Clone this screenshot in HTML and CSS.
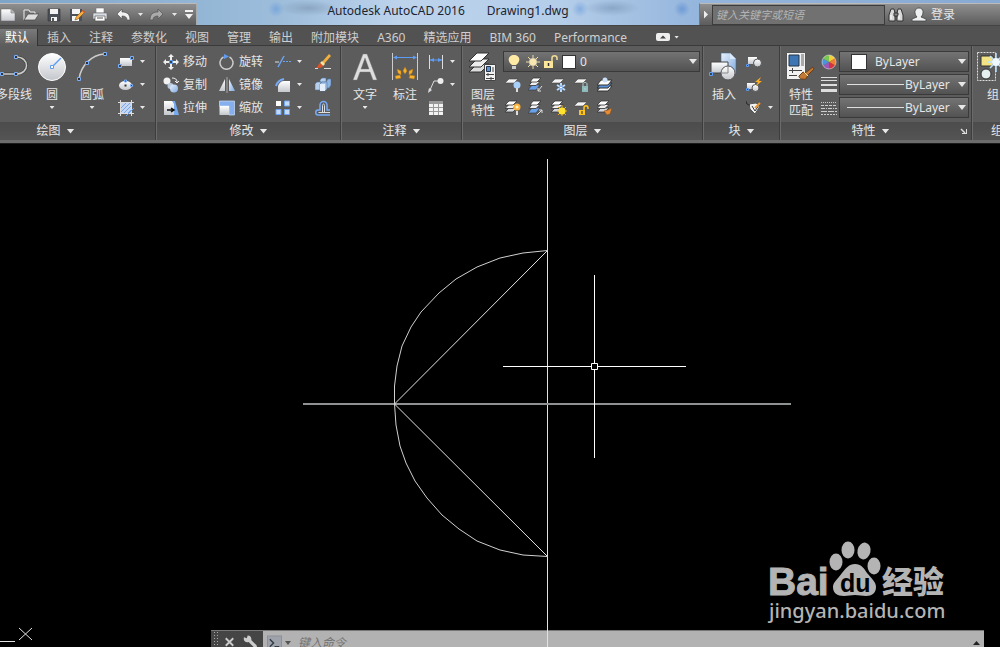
FILE: index.html
```html
<!DOCTYPE html>
<html lang="zh-CN">
<head>
<meta charset="utf-8">
<meta name="viewport" content="width=device-width, initial-scale=1">
<title>Autodesk AutoCAD 2016 - Drawing1.dwg</title>
<link rel="stylesheet" href="styles.css">
</head>
<body>
<svg class="defs" width="0" height="0" aria-hidden="true">
  <defs>
    <linearGradient id="paper" x1="0" y1="0" x2="0" y2="1"><stop offset="0" stop-color="#fff"/><stop offset="1" stop-color="#c3c6cc"/></linearGradient>
    <linearGradient id="sky" x1="0" y1="0" x2="1" y2="1"><stop offset="0" stop-color="#e8f2fd"/><stop offset="1" stop-color="#7fa9e0"/></linearGradient>
    <symbol id="sheet" viewBox="0 0 16 16"><path d="M4 1h9l-4 4H0z" fill="#f4f4f4" stroke="#444" stroke-width=".6"/></symbol>
    <symbol id="stack" viewBox="0 0 16 16"><path d="M4 8h8l-4 4H0z" fill="#d4d8de" stroke="#333" stroke-width=".8"/><path d="M4 4.500h8l-4 4H0z" fill="#eee" stroke="#333" stroke-width=".8"/><path d="M4 1h8L8 5H0z" fill="#fff" stroke="#333" stroke-width=".8"/></symbol>
    <symbol id="bluestack" viewBox="0 0 16 16"><path d="M4 8h8l-4 5H0z" fill="#6aa0e8" stroke="#333" stroke-width=".6"/><path d="M4 4.500h8l-4 4H1z" fill="#eee" stroke="#333" stroke-width=".8"/><path d="M5 1h8L9 5H2z" fill="#fff" stroke="#333" stroke-width=".8"/></symbol>
  </defs>
</svg>

<div class="app">
  <header class="titlebar">
    <div class="quick">
      <button class="q" aria-label="新建"><svg viewBox="0 0 16 16"><path d="M1 2h10l4 4v8H1z" fill="url(#paper)" stroke="#666" stroke-width=".5"/><path d="M11 2v4h4" fill="#bbb" stroke="#777" stroke-width=".6"/></svg></button>
      <button class="q" aria-label="打开"><svg viewBox="0 0 16 16"><path d="M1 13V3h5l1 2h5v3" fill="#707070" stroke="#eee"/><path d="M1 13L5 7h11l-4 6z" fill="#ddd" stroke="#444" stroke-width=".7"/></svg></button>
      <button class="q" aria-label="保存"><svg viewBox="0 0 16 16"><path d="M2 2h12v12H2z" fill="#4b5058" stroke="#333" stroke-width=".6"/><path d="M4 2h8v5H4zM5 10h6v4H5z" fill="#f3f3f3"/><path d="M6 11h2v3H6z" fill="#555"/></svg></button>
      <button class="q" aria-label="另存为"><svg viewBox="0 0 16 16"><path d="M1 2h12v12H1z" fill="#4b5058"/><path d="M3 2h8v5H3zM3 9h7v5H3z" fill="#f3f3f3"/><path d="M14 3l2 2-7 7-3 1 1-3z" fill="#f8ac3c" stroke="#70450e" stroke-width=".5"/><path d="M13 4l2 2 1-1-2-2z" fill="#e44e35"/></svg></button>
      <button class="q" aria-label="打印"><svg viewBox="0 0 16 16"><path d="M4 1h8v5H4z" fill="#fff" stroke="#777" stroke-width=".6"/><path d="M1 6h14v6H1z" fill="#d9dde3" stroke="#666" stroke-width=".6"/><path d="M3 9h10v5H3z" fill="#fff" stroke="#555" stroke-width=".7"/><path d="M5 11h6" stroke="#555"/></svg></button>
      <button class="q" aria-label="放弃"><svg viewBox="0 0 16 16"><path d="M2 7l5-5v3c5 0 8 2 8 8h-3c0-3-2-4-5-4v3z" fill="#f2f2f2" stroke="#555" stroke-width=".7"/></svg></button>
      <span class="caret"></span>
      <button class="q redo" aria-label="重做"><svg viewBox="0 0 16 16"><path d="M14 7L9 2v3c-5 0-8 2-8 8h3c0-3 2-4 5-4v3z" fill="#aaa" stroke="#555" stroke-width=".7"/></svg></button>
      <span class="caret"></span>
      <button class="q more" aria-label="自定义快速访问工具栏"><svg viewBox="0 0 16 16"><path d="M4 4h8" stroke="#f2f2f2" stroke-width="2"/><path d="M4 7h8l-4 5z" fill="#f2f2f2"/></svg></button>
    </div>
    <h1 class="title"><span>Autodesk AutoCAD 2016</span><span>Drawing1.dwg</span></h1>
    <div class="info">
      <span class="fold"></span>
      <input class="search" type="text" aria-label="搜索" placeholder="键入关键字或短语">
      <button class="q" aria-label="查找"><svg viewBox="0 0 16 16"><path d="M3 2h3l1 4v8H1V8zM13 2h-3L9 6v8h6V8z" fill="#d8d8d8" stroke="#333"/><path d="M6 6h4v3H6z" fill="#888" stroke="#333"/><path d="M3 8v4M11 8v4" stroke="#fff"/></svg></button>
      <button class="login"><svg viewBox="0 0 16 16"><path d="M1 14v-2l5-2c-3-3-3-9 2-9s5 6 2 9l5 2v2z" fill="#eef0f2" stroke="#444" stroke-width=".8"/></svg>登录</button>
    </div>
  </header>

  <nav class="tabs">
    <button class="tab active">默认</button><button class="tab">插入</button><button class="tab">注释</button><button class="tab">参数化</button><button class="tab">视图</button><button class="tab">管理</button><button class="tab">输出</button><button class="tab">附加模块</button><button class="tab">A360</button><button class="tab">精选应用</button><button class="tab">BIM 360</button><button class="tab">Performance</button>
    <button class="collapse" aria-label="最小化功能区"><svg viewBox="0 0 14 8"><rect width="14" height="8" rx="2" fill="#eee"/><path d="M4 5.500l3-3 3 3z" fill="#444"/></svg><span class="caret"></span></button>
  </nav>

  <div class="ribbon">
    <section class="panel draw">
      <div class="body">
        <button class="big first"><svg viewBox="0 0 32 32"><path d="M0 24h16c14 0 14-17 0-17" fill="none" stroke="#444" stroke-width="3"/><path d="M0 24h16c14 0 14-17 0-17" fill="none" stroke="#ccc" stroke-width="1.500"/><path d="M14.500 5.500h3v3h-3zM14.500 22.500h3v3h-3zM.5 22.500h3v3h-3z" fill="#333" stroke="#79aefa"/></svg><span>多段线</span></button>
        <button class="big"><svg viewBox="0 0 32 32"><circle cx="16" cy="17" r="13.500" fill="url(#paper)" stroke="#fff"/><path d="M16 17l9-9" stroke="#5f9df5" stroke-width="1.500"/><path d="M14.500 15.500h3v3h-3z" fill="#fff" stroke="#5f9df5"/></svg><span>圆</span><i class="caret"></i></button>
        <button class="big"><svg viewBox="0 0 32 32"><path d="M3 29C5 15 16 5 28 4" fill="none" stroke="#ccc" stroke-width="1.500"/><path d="M1.500 27.500h3v3h-3zM9.500 11.500h3v3h-3zM27.500 2.500h3v3h-3z" fill="#333" stroke="#79aefa"/></svg><span>圆弧</span><i class="caret"></i></button>
        <div class="stack">
          <button class="tool" aria-label="矩形"><svg viewBox="0 0 16 16"><path d="M2 4h12v8H2z" fill="url(#paper)"/><path d="M12.500 2.500h3v3h-3zM.5 10.500h3v3h-3z" fill="#444" stroke="#79aefa"/></svg><i class="caret"></i></button>
          <button class="tool" aria-label="椭圆"><svg viewBox="0 0 16 16"><ellipse cx="7.500" cy="8.500" rx="6.500" ry="4.500" fill="url(#paper)"/><path d="M6.500 7.500h2v2h-2z" fill="#333"/><path d="M6.500 3h2v2h-2zM12.500 7.500h2v2h-2z" fill="#444" stroke="#79aefa"/></svg><i class="caret"></i></button>
          <button class="tool" aria-label="图案填充"><svg viewBox="0 0 16 16"><path d="M3 3h10v10H3z" fill="#c3d6f5"/><path d="M3 8l5-5M3 12l9-9M6 13l7-7M10 13l3-3" stroke="#7ea6e2"/><path d="M0 2.500h16M0 13.500h16M2.500 0v16M13.500 0v16" stroke="#ddd"/><path d="M8 16l8-8" stroke="#6ca4f3"/></svg><i class="caret"></i></button>
        </div>
      </div>
      <button class="foot">绘图<i class="caret wide"></i></button>
    </section>

    <section class="panel modify">
      <div class="body">
        <div class="stack labelled">
          <button class="tool"><svg viewBox="0 0 16 16"><path d="M8 0l3 3H9v3H7V3H5zM8 16l-3-3h2v-3h2v3h2zM0 8l3-3v2h3v2H3v2zM16 8l-3 3V9h-3V7h3V5z" fill="#eee"/><path d="M6.500 6.500h3v3h-3z" fill="#345" stroke="#5f9df5"/></svg>移动</button>
          <button class="tool"><svg viewBox="0 0 16 16"><circle cx="4" cy="4" r="3.500" fill="#f2f2f2"/><path d="M9 1c3 0 5 1 5 4M12 4l2 2 2-2" fill="none" stroke="#eee"/><circle cx="7.500" cy="9" r="3" fill="#b9c9dd"/><circle cx="11" cy="11.500" r="4" fill="url(#sky)"/></svg>复制</button>
          <button class="tool"><svg viewBox="0 0 16 16"><path d="M9 1h3l4 14H9z" fill="#78aaf0"/><path d="M1 1h8l2 3v11H1z" fill="url(#paper)"/><path d="M4 10h6M8 8l3 2-3 2" fill="none" stroke="#111" stroke-width="1.500"/></svg>拉伸</button>
        </div>
        <div class="stack labelled">
          <button class="tool"><svg viewBox="0 0 16 16"><path d="M10.500 3a6.500 6.500 0 1 1-6 0" fill="none" stroke="#ccc" stroke-width="1.500"/><path d="M5 0l5 2.500L5 5z" fill="#5f9df5"/></svg>旋转</button>
          <button class="tool"><svg viewBox="0 0 16 16"><path d="M6 2v12H0z" fill="url(#paper)"/><path d="M10 2v12h6z" fill="url(#sky)"/><path d="M8 0v16" stroke="#aaa"/></svg>镜像</button>
          <button class="tool"><svg viewBox="0 0 16 16"><path d="M.5 1h15v14H10V6H.5z" fill="#86afed" stroke="#c9def9" stroke-width=".7"/><path d="M.5 6H10v9H.5z" fill="url(#paper)"/></svg>缩放</button>
        </div>
        <div class="stack">
          <button class="tool" aria-label="修剪"><svg viewBox="0 0 16 16"><path d="M0 8h4" stroke="#ddd"/><path d="M3 13l6-11" stroke="#6ca4f3" stroke-width="1.500"/><path d="M8 7.500h8" stroke="#6ca4f3" stroke-dasharray="2 1"/></svg><i class="caret"></i></button>
          <button class="tool" aria-label="圆角"><svg viewBox="0 0 16 16"><path d="M3 15V9c1-3 3-5 6-5h6v11z" fill="url(#paper)"/><path d="M1 9c1-4 3-6 8-7" fill="none" stroke="#77aaf5" stroke-width="2"/></svg><i class="caret"></i></button>
          <button class="tool" aria-label="阵列"><svg viewBox="0 0 16 16"><path d="M1 1h5v5H1z" fill="#fff"/><path d="M9.500 1h5v5h-5zM1 9.500h5v5H1zM9.500 9.500h5v5h-5z" fill="#c6dbf8" stroke="#6ca4f3"/></svg><i class="caret"></i></button>
        </div>
        <div class="stack narrow">
          <button class="tool" aria-label="删除"><svg viewBox="0 0 16 16"><path d="M14 0l2 2-7 8-2-2z" fill="#f3b03c"/><path d="M7 7l3 3-2 2-3-3z" fill="#f5e2a0"/><path d="M5 9l3 3c-1 2-4 2-7 2 2-1 2-4 4-5z" fill="#dc5227"/><path d="M0 14.500h3M9 14.500h7" stroke="#ddd"/></svg></button>
          <button class="tool" aria-label="分解"><svg viewBox="0 0 16 16"><path d="M0 7l2-2h4v7l-1 1H0zM5 3l2-2h4v4H5z" fill="#b6cfec" stroke="#56779e" stroke-width=".6"/><path d="M11 5l2-3h3v6l-2 3h-3z" fill="#8db4e4" stroke="#56779e" stroke-width=".6"/><path d="M5 7l2-2h5v7l-2 2H5z" fill="#9dbfe8" stroke="#56779e" stroke-width=".6"/><path d="M5 7h5v7H5z" fill="#e6eff9"/></svg></button>
          <button class="tool" aria-label="偏移"><svg viewBox="0 0 16 16"><path d="M15 15H3c-3 0-3-5 0-5h2V5a3.500 3.500 0 0 1 7 0v5h3" fill="none" stroke="#77aaf5" stroke-width="1.500"/><path d="M15 12.500H3.500M7.500 12V5.500c0-2 2-2 2 0V12" fill="none" stroke="#ddd"/></svg></button>
        </div>
      </div>
      <button class="foot">修改<i class="caret wide"></i></button>
    </section>

    <section class="panel annotate">
      <div class="body">
        <button class="big"><svg viewBox="0 0 32 32"><path d="M4 30L14 4h4l10 26h-4l-3-8H11l-3 8zM12 19h8L16 8z" fill="#dedede" stroke="#777" stroke-width=".4"/></svg><span>文字</span><i class="caret"></i></button>
        <button class="big"><svg viewBox="0 0 32 32"><path d="M3.500 3v27M28.500 3v27" stroke="#ccc"/><path d="M5 7.500h22" stroke="#5f9df5"/><path d="M4 7.500l4-2v4zM28 7.500l-4-2v4z" fill="#5f9df5"/><path d="M16 17l2 4-2 3-2-3zM8 19l4 2v4l-3-2zM24 19l-4 2v4l3-2zM6 26l5-1 1 3-5 1zM26 26l-5-1-1 3 5 1z" fill="#f6b32c" stroke="#b87413" stroke-width=".5"/></svg><span>标注</span></button>
        <div class="stack">
          <button class="tool" aria-label="线性"><svg viewBox="0 0 16 16"><path d="M1.500 1v14M14.500 1v14" stroke="#ddd"/><path d="M2 6h12" stroke="#5f9df5"/><path d="M2 6l4-2v4zM14 6l-4-2v4z" fill="#5f9df5"/></svg><i class="caret"></i></button>
          <button class="tool" aria-label="引线"><svg viewBox="0 0 16 16"><path d="M2 13l4-9h5" fill="none" stroke="#ddd"/><path d="M0 16l1-5 3 2z" fill="#ddd"/><circle cx="12.500" cy="4" r="3" fill="#eee"/></svg><i class="caret"></i></button>
          <button class="tool" aria-label="表格"><svg viewBox="0 0 16 16"><path d="M1 2h14v13H1z" fill="#f2f2f2"/><path d="M1 1h14v3H1z" fill="#999"/><path d="M1 7.500h14M1 11.500h14M5.500 4v11M10.500 4v11" stroke="#999"/></svg></button>
        </div>
      </div>
      <button class="foot">注释<i class="caret wide"></i></button>
    </section>

    <section class="panel layers">
      <div class="body">
        <button class="big"><svg viewBox="0 0 32 32"><path d="M10 14h12L14 22H2z" fill="#ddd" stroke="#333"/><path d="M10 9h12L14 17H2z" fill="#eee" stroke="#333"/><path d="M10 3h12L14 11H2z" fill="#fff" stroke="#333"/><path d="M17.500 14.500h11v16h-11z" fill="#f2f2f2" stroke="#444"/><path d="M19.500 16.500h4v5h-4z" fill="#5f91d6" stroke="#234"/><path d="M26 17v5M19 24.500h8M19 28.500h8M21 23v3M24 27v3" stroke="#444"/></svg><span>图层</span><span>特性</span></button>
        <div class="layerside">
          <div class="combo">
            <svg class="lamp" viewBox="0 0 54 16"><path d="M5 11C-1 6 2 1 7 1s8 5 2 10z" fill="#ffeaa5"/><path d="M5 12h4v3H5z" fill="#ccc"/><g stroke="#f0dfa4"><path d="M26 1v14M19 8h14M21 3l10 10M31 3L21 13"/></g><circle cx="26" cy="8" r="4" fill="#f7e7b0" stroke="#999" stroke-width=".5"/><path d="M37 7h9v7h-9z" fill="#fbe69b"/><path d="M45 8V4c0-3 5-3 5 0v2" fill="none" stroke="#f1dc95" stroke-width="1.500"/><path d="M41.500 9v3" stroke="#333" stroke-width="1.500"/></svg>
            <span class="swatch"></span>
            <select aria-label="图层"><option>0</option></select><i class="caret wide"></i>
          </div>
          <div class="iconrow">
            <button class="tool" aria-label="关"><svg viewBox="0 0 16 16"><use href="#sheet" y="1"/><circle cx="12" cy="8" r="3.500" fill="#a9d0fa"/><path d="M12 11v4" stroke="#ddd" stroke-width="2"/></svg></button>
            <button class="tool" aria-label="隔离"><svg viewBox="0 0 16 16"><use href="#bluestack"/><path d="M14 9l-4 5M10 11v3h3" stroke="#ddd" fill="none"/></svg></button>
            <button class="tool" aria-label="冻结"><svg viewBox="0 0 16 16"><use href="#sheet" y="1"/><path d="M10 6v9M6 8l8 5M14 8l-8 5" stroke="#bcdcff" stroke-width="2"/><circle cx="10" cy="10.500" r="1.500" fill="#fff" stroke="#619be7"/></svg></button>
            <button class="tool" aria-label="锁定"><svg viewBox="0 0 16 16"><use href="#sheet" y="1"/><path d="M8 9h6v6H8z" fill="#8ebabb"/><path d="M9 9V7c0-2 4-2 4 0v2M10 12h2" fill="none" stroke="#b1d1d1"/></svg></button>
            <button class="tool" aria-label="置为当前"><svg viewBox="0 0 16 16"><path d="M4 9h11l-4 5H0z" fill="#fff" stroke="#333"/><path d="M4 6h11l-4 5H0z" fill="#5b8fd6" stroke="#333"/><path d="M4 3h11l-4 5H0z" fill="#fff" stroke="#333"/><circle cx="8" cy="3" r="2.500" fill="#cde0f7"/></svg></button>
          </div>
          <div class="iconrow">
            <button class="tool" aria-label="打开所有图层"><svg viewBox="0 0 16 16"><use href="#stack"/><circle cx="12" cy="7" r="3.500" fill="#ffb13d"/><circle cx="12" cy="7" r="1.500" fill="#fff4bb"/><path d="M12 11v4" stroke="#ddd" stroke-width="2"/></svg></button>
            <button class="tool" aria-label="取消隔离"><svg viewBox="0 0 16 16"><use href="#bluestack"/><path d="M9 15l5-5M11 10h3v3" stroke="#ddd" fill="none"/></svg></button>
            <button class="tool" aria-label="解冻所有图层"><svg viewBox="0 0 16 16"><use href="#stack"/><path d="M11 5v11M6 11h10M7 7l8 8M15 7l-8 8" stroke="#e6ab22"/><circle cx="11" cy="11" r="3.500" fill="#ffe22f"/></svg></button>
            <button class="tool" aria-label="解锁"><svg viewBox="0 0 16 16"><use href="#sheet" y="1"/><path d="M5 10h6v5H5z" fill="#ffc31b"/><path d="M10 10V8c0-3 4-3 4 0v1" fill="none" stroke="#ffc31b" stroke-width="1.500"/><path d="M8 11v3" stroke="#333"/></svg></button>
            <button class="tool" aria-label="匹配图层"><svg viewBox="0 0 16 16"><use href="#stack"/><path d="M15 8l-4 2-4 1 3 4 3-1z" fill="#e28d3a" stroke="#8b4d18" stroke-width=".6"/></svg></button>
          </div>
        </div>
      </div>
      <button class="foot">图层<i class="caret wide"></i></button>
    </section>

    <section class="panel block">
      <div class="body">
        <button class="big"><svg viewBox="0 0 32 32"><path d="M13 3h9l6 6v15H13z" fill="url(#sky)" stroke="#46698e" stroke-width=".6"/><path d="M22 3v6h6" fill="#d9eafc"/><path d="M3 12h17v11H3z" fill="url(#paper)" stroke="#444"/><circle cx="20" cy="23" r="7" fill="url(#paper)" stroke="#555"/><path d="M20 16v7h-7" fill="none" stroke="#888"/><path d="M1.500 22.500h3v3h-3z" fill="#345" stroke="#5f9df5"/></svg><span>插入</span></button>
        <div class="stack">
          <button class="tool" aria-label="创建块"><svg viewBox="0 0 16 16"><path d="M2 3h9v7H2z" fill="url(#paper)"/><circle cx="11.500" cy="9" r="4" fill="url(#paper)" stroke="#555"/><path d="M.5 10.500h2v2h-2z" fill="#345" stroke="#5f9df5"/></svg></button>
          <button class="tool" aria-label="编辑块"><svg viewBox="0 0 16 16"><path d="M1 6h8v6H1z" fill="url(#paper)"/><circle cx="9.500" cy="11" r="3.500" fill="url(#paper)" stroke="#555"/><path d="M15 0L9 5h3l-2 4 6-5h-3z" fill="#ffae22"/><path d="M.5 11.500h2v2h-2z" fill="#345" stroke="#5f9df5"/></svg></button>
          <button class="tool" aria-label="编辑属性"><svg viewBox="0 0 16 16"><path d="M3 4l7-1 4 3-5 8-5-5z" fill="#f2f2f2" stroke="#555"/><path d="M0 1c0 3 2 4 4 4" fill="none" stroke="#222"/><path d="M6 6l3 5 4-6" fill="none" stroke="#333"/><path d="M14 3l-5 5" stroke="#e99831" stroke-width="2"/></svg><i class="caret"></i></button>
        </div>
      </div>
      <button class="foot">块<i class="caret wide"></i></button>
    </section>

    <section class="panel props">
      <div class="body">
        <button class="big"><svg viewBox="0 0 32 32"><path d="M1.500 2.500h19v27h-19z" fill="#f2f2f2" stroke="#555"/><path d="M4 5h10v11H4z" fill="#3e76b4" stroke="#234"/><path d="M16 4v12h3V4z" fill="#aaa"/><path d="M4 20.500h13M7.500 18v5M4 25.500h8" stroke="#444"/><path d="M28 17l-8 6-2-1-4 4c-1 2 4 4 7 3l2-4 6-6z" fill="#c17a36" stroke="#6b3e17"/><path d="M19 22l4 4" stroke="#ffe0a0"/></svg><span>特性</span><span>匹配</span></button>
        <div class="proplist">
          <div class="prop">
            <svg viewBox="0 0 16 16"><path d="M8 8V1a7 7 0 0 1 6 3.500z" fill="#f4cf38"/><path d="M8 8l6-3.500a7 7 0 0 1 0 7z" fill="#ee7f36"/><path d="M8 8l6 3.500A7 7 0 0 1 8 15z" fill="#d63341"/><path d="M8 8v7a7 7 0 0 1-6-3.500z" fill="#9a59b8"/><path d="M8 8l-6 3.500a7 7 0 0 1 0-7z" fill="#4896e2"/><path d="M8 8L2 4.500A7 7 0 0 1 8 1z" fill="#79c653"/><circle cx="8" cy="8" r="7" fill="none" stroke="#ddd" stroke-width=".6"/></svg>
            <div class="combo"><span class="swatch"></span><select class="color" aria-label="对象颜色"><option>ByLayer</option></select><i class="caret wide"></i></div>
          </div>
          <div class="prop">
            <svg viewBox="0 0 16 16"><path d="M0 .5h16M0 3.500h16" stroke="#ddd"/><path d="M0 8h16" stroke="#ddd" stroke-width="2"/><path d="M0 13.500h16" stroke="#ddd" stroke-width="3"/></svg>
            <div class="combo"><span class="line"></span><select aria-label="线宽"><option>ByLayer</option></select><i class="caret wide"></i></div>
          </div>
          <div class="prop">
            <svg viewBox="0 0 16 16"><path d="M0 2.500h16" stroke="#ccc" stroke-dasharray="1 1"/><path d="M0 5.500h16" stroke="#ccc" stroke-dasharray="3 1"/><path d="M0 8.500h16" stroke="#ccc" stroke-dasharray="4 1 1 1"/><path d="M0 11.500h16" stroke="#ccc" stroke-dasharray="6 1"/><path d="M0 14.500h16" stroke="#ccc" stroke-dasharray="2 1"/></svg>
            <div class="combo"><span class="line"></span><select aria-label="线型"><option>ByLayer</option></select><i class="caret wide"></i></div>
          </div>
        </div>
      </div>
      <div class="footrow"><button class="foot">特性<i class="caret wide"></i></button><button class="launch" aria-label="特性设置"><svg viewBox="0 0 8 8"><path d="M1 2l4 4" stroke="#ddd" stroke-width="1.500"/><path d="M6 2v4H2v1h5V2z" fill="#ddd"/></svg></button></div>
    </section>

    <section class="panel group">
      <div class="body">
        <button class="big"><svg viewBox="0 0 32 32"><path d="M.5 2.500h18v28H.5z" fill="none" stroke="#ddd" stroke-dasharray="2 1"/><path d="M4 6h12v10H4z" fill="#f2e485" stroke="#333"/><circle cx="9" cy="24" r="5" fill="#e6f0f1" stroke="#333"/><path d="M19 3v19M10 12h18M13 6l12 12M25 6L13 18" stroke="#bfe2ff" stroke-width="1.500"/><circle cx="19" cy="12" r="4" fill="#eef8ff"/></svg><span>组</span></button>
      </div>
      <button class="foot">组</button>
    </section>
  </div>

  <main class="canvas">
    <form class="command">
      <div class="handle">
        <span class="grip"></span>
        <button type="button" aria-label="关闭"><svg viewBox="0 0 16 16"><path d="M4 4l8 8M12 4l-8 8" stroke="#ccc" stroke-width="2"/></svg></button>
        <button type="button" aria-label="自定义"><svg viewBox="0 0 16 16"><path d="M5 1L4 4 1 3c-1 4 2 6 5 5l6 6c2 1 4-1 2-3L9 6c0-3-1-5-4-5z" fill="#ccc"/></svg></button>
      </div>
      <svg class="prompt" viewBox="0 0 16 16"><rect x=".5" y=".5" width="15" height="15" fill="#9da2ab" stroke="#8b9098"/><path d="M3 4l4 4-4 4M8 12h5" fill="none" stroke="#333a44" stroke-width="1.500"/></svg>
      <i class="caret dark"></i>
      <input type="text" aria-label="命令" placeholder="键入命令">
      <i class="up"></i>
    </form>
    <svg class="drawing" width="1000" height="504" viewBox="0 143 1000 504" fill="none" stroke="#e2e2e2" role="img" aria-label="Drawing1.dwg">
      <path d="M547.500 159V647"/>
      <path d="M303 404H791" stroke="#8f9292" stroke-width="2"/>
      <path d="M547.500 250.500L394.500 404L547.500 556.500"/>
      <path d="M547.500 250.500L523 253L500 258L477 267L456 279L439 293L421 312L411 327L402 346L397 366L394.500 386V404L396 425L400 446L406 463L415 481L427 498L442 515L459 529L477 541L500 550L523 555L547.500 556.500" stroke="#d0d0d0"/>
      <path d="M594.500 275V363M594.500 370V458M503 366.500H591M598 366.500H686M591.500 363.500h6v6h-6z" stroke="#fff"/>
      <path d="M0 641.500H15M19 628L32 640M32 628L19 640"/>
    </svg>
    <svg class="watermark" width="184" height="90" viewBox="0 0 184 90" fill="#b4b4b4" role="img" aria-label="Baidu 经验">
      <text class="bai" x="2" y="55">Bai</text>
      <ellipse cx="70" cy="22" rx="6.500" ry="8.500"/><ellipse cx="82" cy="10" rx="6.500" ry="8.500"/><ellipse cx="98" cy="11" rx="6.500" ry="8.500" transform="rotate(12 98 11)"/><ellipse cx="108" cy="26" rx="6.500" ry="8.500"/>
      <path d="M89 24c6 0 9 4 12 9 5 6 9 9 9 14 0 6-4 9-10 9-4 0-7-1-11-1s-7 1-11 1c-7 0-11-3-11-9 0-5 5-8 9-14 4-5 7-9 13-9z"/>
      <text class="du" x="74" y="52">du</text>
      <text class="jy" x="116" y="53">经验</text>
      <text class="url" x="3" y="78">jingyan.baidu.com</text>
    </svg>
  </main>
</div>
</body>
</html>
```

FILE: styles.css
```css
* { box-sizing: border-box; }

body {
  margin: 0;
  background: #000;
  color: #e6e6e6;
  font: 12px/16px "Noto Sans", "Noto Sans CJK SC", sans-serif;
  overflow: hidden;
}

button, input, select {
  font: inherit;
  color: inherit;
  background: none;
  border: 0;
  padding: 0;
  margin: 0;
}

svg { display: block; flex: none; }
.defs { position: absolute; }

.app {
  display: flex;
  flex-direction: column;
  min-height: 100vh;
}

.caret {
  flex: none;
  width: 5px;
  height: 3px;
  background: #e8e8e8;
  clip-path: polygon(0 0, 100% 0, 50% 100%);
}
.caret.wide { width: 8px; height: 5px; }
.caret.dark { background: #555; width: 6px; height: 4px; }

/* Title bar */
.titlebar {
  display: flex;
  height: 26px;
  background:
    radial-gradient(ellipse 30px 8px at 308px 8px, #8aa6c2, transparent),
    radial-gradient(ellipse 8px 8px at 276px 9px, #7ba7da, transparent),
    radial-gradient(ellipse 8px 8px at 580px 9px, #86aee0, transparent),
    radial-gradient(ellipse 28px 8px at 612px 8px, #8ba7c8, transparent),
    radial-gradient(ellipse 8px 8px at 682px 9px, #6f9bd6, transparent),
    linear-gradient(90deg, #7ea5c8, #9dbddb 28%, #bdd3ec 40%, #b4cde9 56%, #94b5dc 70%, #87aad2);
  border-bottom: 1px solid #444;
}
.quick, .info {
  display: flex;
  align-items: center;
  height: 22px;
  margin-top: 3px;
  background: linear-gradient(#8f8f8f, #5c5c5c);
  border-top: 1px solid #bbb;
}
.quick {
  width: 197px;
  gap: 7px;
  border-right: 1px solid #aaa;
}
.q svg { width: 16px; height: 16px; }
.quick .caret { margin-right: -1px; }
.quick .more { margin-left: -2px; }

.title {
  flex: 1;
  display: flex;
  justify-content: center;
  gap: 22px;
  margin: 0;
  padding: 3px 0 0;
  color: #1b2530;
  font-size: 12px;
  font-weight: 400;
}
.info { width: 301px; border-left: 1px solid #777; gap: 7px; }
.fold {
  width: 4px;
  height: 8px;
  margin-left: 4px;
  margin-right: -3px;
  background: #eee;
  clip-path: polygon(0 0, 100% 50%, 0 100%);
}
.search {
  width: 173px;
  height: 20px;
  padding: 0 3px;
  background: #717171;
  border: 1px solid #3c3c3c;
  font-size: 11px;
  font-style: italic;
}
.search::placeholder { color: #b4b4b4; opacity: 1; }
.info .q { margin-left: -4px; }
.login { display: flex; align-items: center; gap: 4px; }
.login svg { width: 16px; height: 16px; }

/* Ribbon tabs */
.tabs {
  display: flex;
  height: 20px;
  padding-top: 3px;
  background: #525252;
  border-bottom: 1px solid #3a3a3a;
}
.tab {
  padding: 0 9px;
  line-height: 17px;
  color: #cfcfcf;
  white-space: nowrap;
}
.tab.active {
  height: 17px;
  padding: 0 8px 0 5px;
  color: #fff;
  background: linear-gradient(#7a7a7a, #5c5c5c);
  border-right: 1px solid #333;
}
.collapse {
  display: flex;
  align-items: center;
  gap: 4px;
  margin-left: 20px;
}
.collapse svg { width: 14px; height: 8px; }

/* Ribbon panels */
.ribbon {
  display: flex;
  height: 97px;
  overflow: hidden;
  background: #5c5c5c;
  border-bottom: 3px solid #6c6c6c;
}
.panel {
  flex: none;
  display: flex;
  flex-direction: column;
  overflow: hidden;
  border-right: 1px solid #3d3d3d;
  border-left: 1px solid #6b6b6b;
}
.draw { width: 156px; border-left: 0; }
.modify { width: 185px; }
.annotate { width: 121px; }
.layers { width: 241px; }
.block { width: 77px; }
.props { width: 192px; }
.group { flex: 1 0 28px; border-right: 0; }

.body {
  flex: 1;
  display: flex;
  padding-top: 4px;
}
.foot {
  flex: none;
  display: flex;
  align-items: center;
  justify-content: center;
  gap: 6px;
  height: 18px;
  line-height: 18px;
  background: linear-gradient(#4c4c4c, #545454);
}
.draw .foot { padding-right: 44px; }
.group .foot { justify-content: flex-start; padding-left: 18px; }
.footrow { display: flex; background: #4f4f4f; }
.footrow .foot { flex: 1; }
.launch svg { width: 8px; height: 8px; margin-right: 3px; }

.big {
  flex: none;
  display: flex;
  flex-direction: column;
  align-items: center;
  width: 40px;
  white-space: nowrap;
}
.big.first { width: 36px; margin-left: -4px; }
.big svg { width: 32px; height: 32px; margin-bottom: 5px; }
.big.first svg { align-self: flex-end; }
.big .caret { margin-top: 3px; }

.stack { padding-left: 6px; }
.tool {
  display: flex;
  align-items: center;
  height: 23px;
}
.tool svg { width: 16px; height: 16px; }
.tool .caret { margin-left: 6px; }
.labelled { width: 56px; }
.labelled .tool { gap: 4px; white-space: nowrap; }
.narrow { padding-left: 13px; }
.annotate .stack { padding-left: 3px; }
.annotate .body { padding-left: 3px; }
.block .stack { padding-left: 2px; }

.combo {
  display: flex;
  align-items: center;
  height: 21px;
  padding-right: 1px;
  background: linear-gradient(#747474, #525252);
  border: 1px solid #3a3a3a;
}
.combo select {
  flex: 1;
  min-width: 0;
  appearance: none;
}
.combo option { color: #222; }
.combo .caret { margin-right: 1px; pointer-events: none; }
.swatch {
  width: 14px;
  height: 14px;
  background: #fff;
  border: 1px solid #333;
}
.line { width: 57px; height: 1px; margin: 0 1px 0 7px; background: #e0e0e0; }

.layerside { flex: 1; padding-right: 2px; }
.lamp { width: 54px; height: 16px; margin: 0 1px 0 3px; }
.layerside select { margin-left: 4px; }
.layerside .combo { margin: 1px 0; }
.iconrow { display: flex; gap: 7px; padding-left: 2px; }

.proplist { flex: 1; padding-right: 2px; }
.prop {
  display: flex;
  align-items: center;
  gap: 2px;
  height: 23px;
}
.prop > svg { width: 16px; height: 16px; }
.prop .combo { flex: 1; }
.prop .swatch { width: 16px; height: 16px; margin: 0 8px 0 11px; }

/* Drawing area */
.canvas {
  position: relative;
  flex: 1;
  background: #000;
  border-top: 1px solid #1b1b1b;
  overflow: hidden;
}
.drawing { position: absolute; left: 0; top: -1px; pointer-events: none; }
.watermark { position: absolute; right: 50px; bottom: 17px; }
.watermark text { font-family: "Noto Sans", "Noto Sans CJK SC", sans-serif; }
.watermark .bai { font: 700 39px "Liberation Sans", sans-serif; stroke: #b4b4b4; }
.watermark .du { font: 700 25px "Liberation Sans", sans-serif; fill: #000; }
.watermark .jy { font: 900 31px "Noto Sans CJK SC", sans-serif; }
.watermark .url { font-size: 20px; font-weight: 500; }

.command {
  position: absolute;
  left: 211px;
  right: 16px;
  bottom: 0;
  display: flex;
  align-items: flex-start;
  height: 17px;
  overflow: hidden;
  background: #b2b2b2;
  border-top: 1px solid #777;
}
.handle {
  display: flex;
  align-items: center;
  gap: 6px;
  width: 52px;
  height: 22px;
  padding-left: 2px;
  background: #454545;
}
.grip {
  width: 5px;
  height: 22px;
  margin-right: -2px;
  background: radial-gradient(circle, #aaa 1px, transparent 1px) 0 0 / 3px 3px;
}
.handle svg { width: 15px; height: 16px; }
.prompt { width: 15px; height: 16px; margin: 4px 3px 0 4px; }
.command .caret { margin-top: 10px; }
.command input {
  flex: 1;
  height: 22px;
  margin-left: 7px;
  color: #444;
}
.command input::placeholder { color: #747474; opacity: 1; font-style: italic; }
.up {
  width: 7px;
  height: 4px;
  margin: 10px 4px 0 0;
  background: #222;
  clip-path: polygon(50% 0, 100% 100%, 0 100%);
}
```
